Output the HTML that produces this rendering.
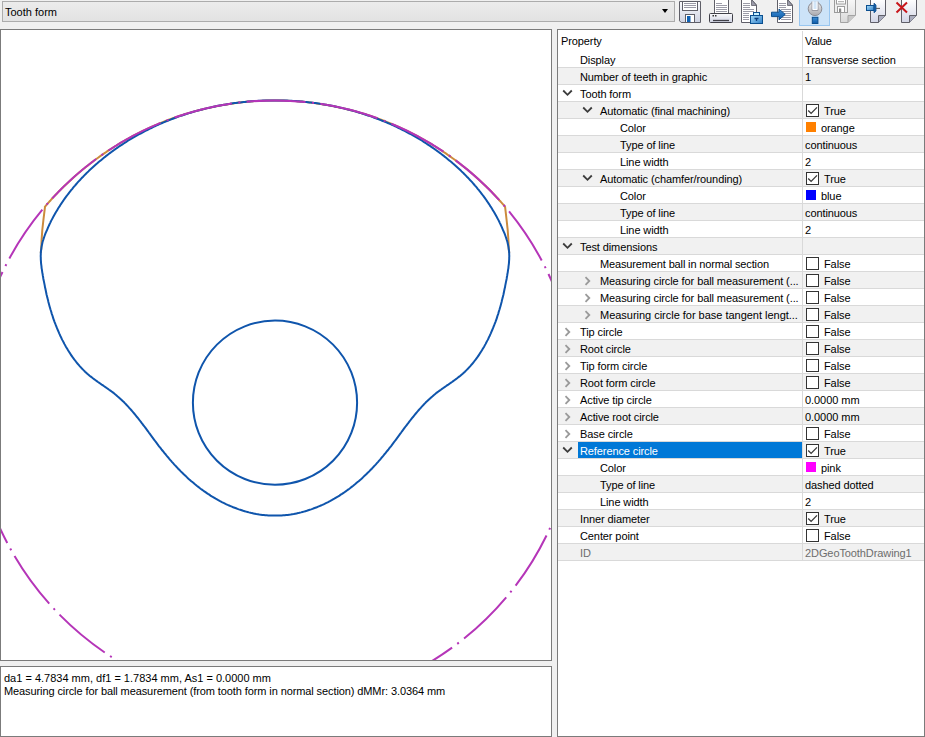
<!DOCTYPE html>
<html><head><meta charset="utf-8"><style>
*{margin:0;padding:0;box-sizing:border-box}
html,body{width:925px;height:737px;overflow:hidden;background:#f0f0f0;font-family:"Liberation Sans",sans-serif;font-size:11px;color:#000}
.abs{position:absolute}
#combo{left:2px;top:1px;width:673px;height:21px;border:1px solid #acacac;background:linear-gradient(#ececec,#e2e2e2)}
#combo .t{position:absolute;left:2px;top:4px;line-height:13px;white-space:pre}
#combo .arr{position:absolute;left:659px;top:7px;width:0;height:0;border-left:3.5px solid transparent;border-right:3.5px solid transparent;border-top:4.5px solid #000}
#graph{left:0;top:29px;width:552px;height:632px;border:1px solid #7b7b7b;background:#fff;overflow:hidden}
#graph svg{position:absolute;left:-1px;top:-30px}
#status{left:0;top:666px;width:552px;height:71px;border:1px solid #7b7b7b;background:#fff}
#status .l{position:absolute;left:3px;white-space:pre;line-height:13px}
#props{left:557px;top:29px;width:368px;height:708px;border:1px solid #7b7b7b;background:#fff;overflow:hidden;letter-spacing:-0.1px}
.row{position:absolute;left:0;width:366px;height:17px;border-bottom:1px solid #d9d9d9;background:#fff}
.row.g{background:#f1f1f1}
.row .n{position:absolute;top:3px;line-height:13px;white-space:pre}
.row .v{position:absolute;top:3px;line-height:13px;white-space:pre}
.row .sel{position:absolute;left:20px;top:0;width:224px;height:16px;background:#0078d7}
.cb{position:absolute;left:248px;top:2px;width:13px;height:13px;border:1px solid #333;background:#fff}
.sw{position:absolute;left:248px;top:3px;width:10px;height:10px}
.divider{position:absolute;left:244px;top:1px;width:1px;height:530px;background:#d9d9d9}
</style></head>
<body>
<div id="combo" class="abs"><span class="t">Tooth form</span><div class="arr"></div></div>
<svg class="abs" style="left:0;top:0" width="925" height="28" viewBox="0 0 925 28">
<defs>
<linearGradient id="gBody" x1="0" y1="0" x2="0" y2="1"><stop offset="0" stop-color="#fbfbfd"/><stop offset="1" stop-color="#cfd3e2"/></linearGradient>
<linearGradient id="gPage" x1="0" y1="0" x2="0" y2="1"><stop offset="0" stop-color="#ffffff"/><stop offset="1" stop-color="#d3d6e6"/></linearGradient>
<linearGradient id="gBlue" x1="0" y1="0" x2="1" y2="1"><stop offset="0" stop-color="#a9dcf8"/><stop offset="1" stop-color="#2e7fc8"/></linearGradient>
<linearGradient id="gBlue2" x1="0" y1="0" x2="0" y2="1"><stop offset="0" stop-color="#3f8fd6"/><stop offset="1" stop-color="#0d5aa8"/></linearGradient>
<linearGradient id="gGray" x1="0" y1="0" x2="0" y2="1"><stop offset="0" stop-color="#eeeeee"/><stop offset="1" stop-color="#a9a9ae"/></linearGradient>
<linearGradient id="gDis" x1="0" y1="0" x2="0" y2="1"><stop offset="0" stop-color="#f8f8f8"/><stop offset="1" stop-color="#d9d9d9"/></linearGradient>
</defs>
<!-- floppy -->
<path d="M679.5,1.5 H700.5 V22.5 H681.2 L679.5,20.8 Z" fill="url(#gBody)" stroke="#5f5f68" stroke-width="1"/>
<rect x="682.5" y="1.5" width="15" height="9" fill="#fff" stroke="#5f5f68"/>
<path d="M684,3.5 H696 M684,5.5 H696 M684,7.5 H696" stroke="#9a9aa6" stroke-width="1"/>
<rect x="685.5" y="14.5" width="9" height="8" fill="#fff" stroke="#5f5f68"/>
<rect x="687" y="16" width="3.5" height="6" fill="#1062b4"/>
<!-- printer -->
<rect x="714.5" y="-0.5" width="14" height="14" fill="#fff" stroke="#5f5f68"/>
<path d="M716,3.5 H722 M716,5.5 H727 M716,7.5 H727 M716,9.5 H727 M716,11.5 H727" stroke="#9c9ca8" stroke-width="1"/>
<rect x="709.5" y="13.5" width="23" height="9" rx="1" fill="url(#gBody)" stroke="#404048"/>
<rect x="712.5" y="15" width="1.5" height="1.5" fill="#333"/><rect x="715" y="15" width="1.5" height="1.5" fill="#333"/>
<path d="M713,20.5 H729" stroke="#404048" stroke-width="1.3"/>
<!-- doc + briefcase -->
<path d="M741.5,-0.5 H751.5 L756.5,5 V22.5 H741.5 Z" fill="#fff" stroke="#5f5f68"/>
<path d="M751.5,-0.5 V5.5 H756.5 Z" fill="#9c9cab" stroke="#5f5f68" stroke-width="0.8"/>
<path d="M743,3.5 H750 M743,5.5 H750 M743,7.5 H750 M743,9.5 H754 M743,11.5 H754 M743,13.5 H749 M743,15.5 H749 M743,17.5 H749 M743,19.5 H749" stroke="#9c9ca8" stroke-width="1"/>
<rect x="753.5" y="12.5" width="6" height="3.5" fill="#c9f1ff" stroke="#0b4f8f"/>
<rect x="750.5" y="15.5" width="12" height="8" fill="url(#gBlue)" stroke="#0b4f8f"/>
<path d="M754.5,18.5 H758.5 M756.5,18.5 V21" stroke="#0b3f7f" stroke-width="1.3"/>
<!-- import -->
<path d="M777.5,-0.5 H787.5 L792.5,5 V22.5 H777.5 Z" fill="#fff" stroke="#5f5f68"/>
<path d="M787.5,-0.5 V5.5 H792.5 Z" fill="#9c9cab" stroke="#5f5f68" stroke-width="0.8"/>
<path d="M779,3.5 H786 M779,5.5 H786 M779,7.5 H786 M781,9.5 H791 M782,11.5 H791 M784,13.5 H791 M783,15.5 H791 M782,17.5 H791 M781,19.5 H791" stroke="#9c9ca8" stroke-width="1"/>
<path d="M771.5,12.2 H779 V9 L785.2,14.4 L779,19.8 V16.6 H771.5 Z" fill="url(#gBlue2)" stroke="#0b4f8f" stroke-width="1"/>
<!-- highlighted tool -->
<rect x="799.5" y="-0.5" width="30" height="26" fill="#cce3f8" stroke="#98c6f0"/>
<circle cx="815" cy="8.8" r="6.8" fill="url(#gGray)" stroke="#8d8d94"/>
<path d="M812,1.5 V10.5 H818 V1.5" fill="#dde9f5" stroke="#9a9aa2" stroke-width="1"/>
<path d="M813,1.5 V9.5 H817 V1.5" fill="#d3e6f8" stroke="#ffffff" stroke-width="1"/>
<rect x="812.3" y="17.3" width="5.6" height="6.2" fill="url(#gBlue2)" stroke="#0b4f8f"/>
<!-- disabled -->
<path d="M840.5,-0.5 H855.5 V15 L848,22.5 H840.5 Z" fill="url(#gDis)" stroke="#a3a3a3"/>
<path d="M848,22.5 V15.5 H855.5" fill="#c8c8c8" stroke="#a3a3a3"/>
<rect x="834.5" y="-0.5" width="13" height="13" fill="#efefef" stroke="#9c9c9c"/>
<rect x="836.5" y="-0.5" width="9" height="4.5" fill="#fff" stroke="#9c9c9c"/>
<path d="M838,1.7 H844" stroke="#a8a8a8"/>
<rect x="837.5" y="6.5" width="7" height="6" fill="#fff" stroke="#9c9c9c"/>
<rect x="839" y="8.5" width="2.2" height="3.5" fill="#8a8a8a"/>
<!-- pin page -->
<path d="M870.5,-0.5 H885.5 V15.5 L878.5,22.5 H870.5 Z" fill="url(#gPage)" stroke="#5f5f68"/>
<path d="M878.5,22.5 V15.5 H885.5" fill="#a9acbd" stroke="#5f5f68"/>
<rect x="866.5" y="5.5" width="7.5" height="5" fill="url(#gBlue)" stroke="#0b4f8f"/>
<path d="M874,3.2 L876,5 V11 L874,12.8 Z" fill="#1a60a8" stroke="#0b4f8f" stroke-width="0.8"/>
<path d="M876,8.4 H880" stroke="#555" stroke-width="1"/>
<!-- delete page -->
<path d="M901.5,-0.5 H916.5 V15.5 L909.5,22.5 H901.5 Z" fill="url(#gPage)" stroke="#5f5f68"/>
<path d="M909.5,22.5 V15.5 H916.5" fill="#a9acbd" stroke="#5f5f68"/>
<path d="M896.5,2.5 L907,12.5 M896.5,12.5 L907,2.5" stroke="#c8161b" stroke-width="2"/>
</svg>

<div id="graph" class="abs"><svg width="552" height="690" viewBox="0 0 552 690">
<path d="M275.0,100.5 L272.8,100.5 L270.6,100.5 L268.4,100.6 L266.2,100.6 L264.0,100.7 L261.8,100.8 L259.6,100.9 L257.4,101.0 L255.2,101.1 L253.0,101.3 L250.9,101.5 L248.7,101.6 L246.5,101.8 L244.3,102.1 L242.1,102.3 L239.9,102.5 L237.7,102.8 L235.6,103.1 L233.4,103.4 L231.2,103.7 L229.0,104.0 L226.9,104.4 L224.7,104.7 L222.5,105.1 L220.4,105.5 L218.2,105.9 L216.0,106.3 L213.9,106.7 L211.7,107.2 L209.6,107.7 L207.4,108.1 L205.3,108.6 L203.2,109.2 L201.0,109.7 L198.9,110.2 L196.8,110.8 L194.7,111.4 L192.5,112.0 L190.4,112.6 L188.3,113.2 L186.2,113.8 L184.1,114.5 L182.0,115.2 L179.9,115.8 L177.9,116.5 L175.8,117.3 L173.7,118.0 L171.6,118.7 L169.6,119.5 L167.5,120.3 L165.5,121.0 L163.4,121.9 L161.4,122.7 L159.4,123.5 L157.3,124.4 L155.3,125.2 L153.3,126.1 L151.3,127.0 L149.3,127.9 L147.3,128.8 L145.3,129.8 L143.3,130.7 L141.3,131.7 L139.4,132.6 L137.4,133.6 L135.5,134.6 L133.5,135.7 L131.6,136.7 L129.6,137.8 L127.7,138.8 L125.8,139.9 L123.9,141.0 L122.0,142.1 L120.1,143.2 L118.2,144.3 L116.4,145.5 L114.5,146.7 L112.6,147.8 L110.8,149.0 L108.9,150.2 L107.1,151.4 L105.3,152.7 L103.5,153.9 L101.7,155.2 L99.9,156.4 L98.1,157.7 L96.3,159.0 L94.5,160.3 L92.8,161.6 L91.0,162.9 L89.3,164.3 L87.6,165.7 L85.8,167.0 L84.1,168.4 L82.4,169.8 L80.7,171.2 L79.1,172.6 L77.4,174.1 L75.7,175.5 L74.1,177.0 L72.5,178.4 L70.8,179.9 L69.2,181.4 L67.6,182.9 L66.0,184.4 L64.4,185.9 L62.9,187.5 L61.3,189.0 L59.8,190.6 L58.2,192.1 L56.7,193.7 L55.2,195.3 L53.7,196.9 L52.2,198.5 L50.7,200.2 L49.2,201.8 L47.8,203.4 L46.3,205.1 L44.9,206.8 L45.0,206.8 L43.4,220.0 L42.3,230.0 L41.6,240.0 L41.4,245.0 L41.3,248.6 L41.1,250.1 L40.9,251.6 L40.8,253.1 M275.0,100.5 L277.2,100.5 L279.4,100.5 L281.6,100.6 L283.8,100.6 L286.0,100.7 L288.2,100.8 L290.4,100.9 L292.6,101.0 L294.8,101.1 L297.0,101.3 L299.1,101.5 L301.3,101.6 L303.5,101.8 L305.7,102.1 L307.9,102.3 L310.1,102.5 L312.3,102.8 L314.4,103.1 L316.6,103.4 L318.8,103.7 L321.0,104.0 L323.1,104.4 L325.3,104.7 L327.5,105.1 L329.6,105.5 L331.8,105.9 L334.0,106.3 L336.1,106.7 L338.3,107.2 L340.4,107.7 L342.6,108.1 L344.7,108.6 L346.8,109.2 L349.0,109.7 L351.1,110.2 L353.2,110.8 L355.3,111.4 L357.5,112.0 L359.6,112.6 L361.7,113.2 L363.8,113.8 L365.9,114.5 L368.0,115.2 L370.1,115.8 L372.1,116.5 L374.2,117.3 L376.3,118.0 L378.4,118.7 L380.4,119.5 L382.5,120.3 L384.5,121.0 L386.6,121.9 L388.6,122.7 L390.6,123.5 L392.7,124.4 L394.7,125.2 L396.7,126.1 L398.7,127.0 L400.7,127.9 L402.7,128.8 L404.7,129.8 L406.7,130.7 L408.7,131.7 L410.6,132.6 L412.6,133.6 L414.5,134.6 L416.5,135.7 L418.4,136.7 L420.4,137.8 L422.3,138.8 L424.2,139.9 L426.1,141.0 L428.0,142.1 L429.9,143.2 L431.8,144.3 L433.6,145.5 L435.5,146.7 L437.4,147.8 L439.2,149.0 L441.1,150.2 L442.9,151.4 L444.7,152.7 L446.5,153.9 L448.3,155.2 L450.1,156.4 L451.9,157.7 L453.7,159.0 L455.5,160.3 L457.2,161.6 L459.0,162.9 L460.7,164.3 L462.4,165.7 L464.2,167.0 L465.9,168.4 L467.6,169.8 L469.3,171.2 L470.9,172.6 L472.6,174.1 L474.3,175.5 L475.9,177.0 L477.5,178.4 L479.2,179.9 L480.8,181.4 L482.4,182.9 L484.0,184.4 L485.6,185.9 L487.1,187.5 L488.7,189.0 L490.2,190.6 L491.8,192.1 L493.3,193.7 L494.8,195.3 L496.3,196.9 L497.8,198.5 L499.3,200.2 L500.8,201.8 L502.2,203.4 L503.7,205.1 L505.1,206.8 L505.1,206.8 L506.6,220.0 L507.7,230.0 L508.4,240.0 L508.6,245.0 L508.7,248.6 L508.9,250.1 L509.1,251.6 L509.2,253.1" fill="none" stroke="#cc8a3c" stroke-width="2" stroke-linejoin="round"/>
<path d="M275.0,100.4 L273.5,100.4 L272.0,100.4 L270.5,100.4 L269.0,100.4 L267.5,100.5 L266.0,100.5 L264.5,100.6 L263.0,100.6 L261.5,100.7 L260.0,100.7 L258.5,100.8 L257.0,100.9 L255.5,101.0 L254.0,101.1 L252.5,101.2 L251.0,101.3 L249.5,101.5 L248.0,101.6 L246.5,101.7 L245.0,101.9 L243.5,102.0 L242.0,102.2 L240.5,102.4 L239.0,102.5 L237.5,102.7 L236.0,102.9 L234.5,103.1 L233.0,103.3 L231.5,103.5 L230.1,103.8 L228.6,104.0 L227.1,104.2 L225.6,104.5 L224.1,104.7 L222.6,105.0 L221.2,105.3 L219.7,105.5 L218.2,105.8 L216.7,106.1 L215.2,106.4 L213.8,106.7 L212.3,107.0 L210.8,107.4 L209.4,107.7 L207.9,108.0 L206.4,108.4 L205.0,108.7 L203.5,109.1 L202.1,109.5 L200.6,109.8 L199.1,110.2 L197.7,110.6 L196.2,111.0 L194.8,111.4 L193.4,111.8 L191.9,112.3 L190.5,112.7 L189.0,113.1 L187.6,113.6 L186.2,114.0 L184.7,114.5 L183.3,115.0 L181.9,115.5 L180.4,115.9 L179.0,116.4 L177.6,116.9 L176.2,117.5 L174.8,118.0 L173.4,118.5 L172.0,119.0 L170.6,119.6 L169.2,120.1 L167.8,120.7 L166.4,121.2 L165.0,121.8 L163.6,122.4 L162.2,123.0 L160.8,123.6 L159.4,124.2 L158.1,124.8 L156.7,125.4 L155.3,126.0 L154.0,126.7 L152.6,127.3 L151.3,128.0 L149.9,128.6 L148.6,129.3 L147.2,130.0 L145.9,130.7 L144.5,131.4 L143.2,132.1 L141.9,132.8 L140.6,133.5 L139.2,134.2 L137.9,134.9 L136.6,135.7 L135.3,136.4 L134.0,137.2 L132.7,137.9 L131.4,138.7 L130.1,139.5 L128.8,140.2 L127.5,141.0 L126.3,141.8 L125.0,142.6 L123.7,143.5 L122.5,144.3 L121.2,145.1 L120.0,145.9 L118.7,146.8 L117.5,147.6 L116.3,148.5 L115.0,149.4 L113.8,150.2 L112.6,151.1 L111.4,152.0 L110.2,152.9 L109.0,153.8 L107.8,154.7 L106.6,155.6 L105.4,156.6 L104.2,157.5 L103.0,158.5 L101.9,159.4 L100.7,160.4 L99.6,161.3 L98.4,162.3 L97.3,163.3 L96.1,164.3 L95.0,165.3 L93.9,166.3 L92.8,167.3 L91.7,168.3 L90.6,169.3 L89.5,170.3 L88.4,171.4 L87.3,172.4 L86.2,173.5 L85.2,174.6 L84.1,175.6 L83.1,176.7 L82.0,177.8 L81.0,178.9 L80.0,180.0 L78.9,181.1 L77.9,182.2 L76.9,183.3 L75.9,184.5 L75.0,185.6 L74.0,186.7 L73.0,187.9 L72.1,189.1 L71.1,190.2 L70.2,191.4 L69.2,192.6 L68.3,193.8 L67.4,195.0 L66.5,196.2 L65.6,197.4 L64.7,198.6 L63.9,199.8 L63.0,201.1 L62.2,202.3 L61.3,203.6 L60.5,204.8 L59.7,206.1 L58.9,207.3 L58.1,208.6 L57.3,209.9 L56.5,211.2 L55.7,212.5 L55.0,213.8 L54.3,215.1 L53.5,216.4 L52.8,217.8 L52.1,219.1 L51.4,220.4 L50.7,221.8 L50.1,223.1 L49.4,224.5 L48.8,225.8 L48.2,227.2 L47.6,228.6 L47.0,230.0 L46.4,231.3 L45.8,232.7 L45.2,234.1 L44.7,235.5 L44.2,237.0 L43.7,238.4 L43.3,239.8 L42.8,241.3 L42.4,242.7 L42.1,244.2 L41.8,245.6 L41.5,247.1 L41.3,248.6 L41.1,250.1 L40.9,251.6 L40.8,253.1 L40.8,254.6 L40.7,256.1 L40.8,257.6 L40.8,259.1 L40.9,260.6 L41.0,262.1 L41.1,263.6 L41.3,265.1 L41.5,266.6 L41.6,268.1 L41.9,269.6 L42.1,271.1 L42.3,272.6 L42.6,274.0 L42.8,275.5 L43.1,277.0 L43.3,278.5 L43.6,280.0 L43.9,281.4 L44.2,282.9 L44.5,284.4 L44.8,285.9 L45.0,287.3 L45.4,288.8 L45.7,290.3 L46.0,291.8 L46.3,293.2 L46.6,294.7 L47.0,296.2 L47.3,297.6 L47.7,299.1 L48.1,300.5 L48.4,302.0 L48.8,303.5 L49.2,304.9 L49.6,306.4 L50.0,307.8 L50.4,309.3 L50.9,310.7 L51.3,312.1 L51.7,313.6 L52.2,315.0 L52.7,316.4 L53.1,317.9 L53.6,319.3 L54.1,320.7 L54.6,322.1 L55.2,323.5 L55.7,324.9 L56.3,326.3 L56.8,327.7 L57.4,329.1 L58.0,330.5 L58.6,331.9 L59.2,333.3 L59.8,334.6 L60.4,336.0 L61.1,337.4 L61.7,338.7 L62.4,340.1 L63.1,341.4 L63.8,342.7 L64.5,344.1 L65.2,345.4 L65.9,346.7 L66.7,348.0 L67.5,349.3 L68.2,350.6 L69.0,351.8 L69.9,353.1 L70.7,354.4 L71.5,355.6 L72.4,356.9 L73.3,358.1 L74.2,359.3 L75.1,360.5 L76.0,361.7 L76.9,362.8 L77.9,364.0 L78.9,365.1 L79.9,366.3 L80.9,367.4 L81.9,368.5 L83.0,369.6 L84.0,370.6 L85.1,371.7 L86.2,372.7 L87.3,373.7 L88.5,374.7 L89.6,375.7 L90.8,376.6 L92.0,377.5 L93.2,378.5 L94.4,379.4 L95.6,380.2 L96.8,381.1 L98.0,382.0 L99.3,382.9 L100.5,383.7 L101.7,384.6 L103.0,385.4 L104.2,386.3 L105.4,387.1 L106.7,388.0 L107.9,388.8 L109.1,389.7 L110.4,390.6 L111.6,391.5 L112.8,392.4 L114.0,393.3 L115.1,394.3 L116.3,395.2 L117.4,396.2 L118.6,397.2 L119.7,398.2 L120.8,399.2 L121.9,400.2 L123.0,401.3 L124.1,402.3 L125.1,403.4 L126.2,404.5 L127.2,405.6 L128.2,406.7 L129.2,407.8 L130.2,408.9 L131.2,410.0 L132.2,411.2 L133.2,412.3 L134.2,413.5 L135.1,414.6 L136.1,415.8 L137.0,417.0 L138.0,418.1 L138.9,419.3 L139.8,420.5 L140.7,421.7 L141.6,422.9 L142.6,424.1 L143.5,425.3 L144.4,426.5 L145.3,427.7 L146.2,428.9 L147.1,430.1 L148.0,431.3 L148.8,432.5 L149.7,433.7 L150.6,434.9 L151.5,436.2 L152.4,437.4 L153.3,438.6 L154.2,439.8 L155.1,441.0 L156.0,442.2 L156.9,443.4 L157.8,444.6 L158.7,445.8 L159.7,447.0 L160.6,448.2 L161.5,449.4 L162.4,450.5 L163.4,451.7 L164.3,452.9 L165.3,454.0 L166.2,455.2 L167.2,456.4 L168.2,457.5 L169.1,458.7 L170.1,459.8 L171.1,460.9 L172.1,462.1 L173.1,463.2 L174.1,464.3 L175.1,465.4 L176.2,466.5 L177.2,467.6 L178.2,468.7 L179.3,469.8 L180.3,470.9 L181.4,471.9 L182.5,473.0 L183.5,474.0 L184.6,475.1 L185.7,476.1 L186.8,477.1 L187.9,478.2 L189.0,479.2 L190.2,480.2 L191.3,481.2 L192.4,482.1 L193.6,483.1 L194.7,484.1 L195.9,485.0 L197.1,486.0 L198.3,486.9 L199.4,487.8 L200.6,488.7 L201.9,489.6 L203.1,490.5 L204.3,491.4 L205.5,492.2 L206.8,493.1 L208.0,493.9 L209.3,494.7 L210.5,495.6 L211.8,496.4 L213.1,497.1 L214.4,497.9 L215.7,498.7 L217.0,499.4 L218.3,500.2 L219.6,500.9 L221.0,501.6 L222.3,502.3 L223.6,502.9 L225.0,503.6 L226.4,504.3 L227.7,504.9 L229.1,505.5 L230.5,506.1 L231.9,506.7 L233.2,507.3 L234.6,507.8 L236.1,508.3 L237.5,508.9 L238.9,509.4 L240.3,509.8 L241.7,510.3 L243.2,510.8 L244.6,511.2 L246.1,511.6 L247.5,512.0 L249.0,512.4 L250.4,512.7 L251.9,513.1 L253.4,513.4 L254.8,513.7 L256.3,514.0 L257.8,514.2 L259.3,514.5 L260.8,514.7 L262.3,514.9 L263.8,515.0 L265.3,515.2 L266.8,515.3 L268.3,515.4 L269.8,515.5 L271.3,515.5 L272.8,515.6 L275.0,515.6 L277.2,515.6 L278.7,515.5 L280.2,515.5 L281.7,515.4 L283.2,515.3 L284.7,515.2 L286.2,515.0 L287.7,514.9 L289.2,514.7 L290.7,514.5 L292.2,514.2 L293.7,514.0 L295.2,513.7 L296.6,513.4 L298.1,513.1 L299.6,512.7 L301.0,512.4 L302.5,512.0 L303.9,511.6 L305.4,511.2 L306.8,510.8 L308.3,510.3 L309.7,509.8 L311.1,509.4 L312.5,508.9 L313.9,508.3 L315.4,507.8 L316.8,507.3 L318.1,506.7 L319.5,506.1 L320.9,505.5 L322.3,504.9 L323.6,504.3 L325.0,503.6 L326.4,502.9 L327.7,502.3 L329.0,501.6 L330.4,500.9 L331.7,500.2 L333.0,499.4 L334.3,498.7 L335.6,497.9 L336.9,497.1 L338.2,496.4 L339.5,495.6 L340.7,494.7 L342.0,493.9 L343.2,493.1 L344.5,492.2 L345.7,491.4 L346.9,490.5 L348.1,489.6 L349.4,488.7 L350.6,487.8 L351.7,486.9 L352.9,486.0 L354.1,485.0 L355.3,484.1 L356.4,483.1 L357.6,482.1 L358.7,481.2 L359.8,480.2 L361.0,479.2 L362.1,478.2 L363.2,477.1 L364.3,476.1 L365.4,475.1 L366.5,474.0 L367.5,473.0 L368.6,471.9 L369.7,470.9 L370.7,469.8 L371.8,468.7 L372.8,467.6 L373.8,466.5 L374.9,465.4 L375.9,464.3 L376.9,463.2 L377.9,462.1 L378.9,460.9 L379.9,459.8 L380.9,458.7 L381.8,457.5 L382.8,456.4 L383.8,455.2 L384.7,454.0 L385.7,452.9 L386.6,451.7 L387.6,450.5 L388.5,449.4 L389.4,448.2 L390.3,447.0 L391.3,445.8 L392.2,444.6 L393.1,443.4 L394.0,442.2 L394.9,441.0 L395.8,439.8 L396.7,438.6 L397.6,437.4 L398.5,436.2 L399.4,434.9 L400.3,433.7 L401.2,432.5 L402.0,431.3 L402.9,430.1 L403.8,428.9 L404.7,427.7 L405.6,426.5 L406.5,425.3 L407.4,424.1 L408.4,422.9 L409.3,421.7 L410.2,420.5 L411.1,419.3 L412.0,418.1 L413.0,417.0 L413.9,415.8 L414.9,414.6 L415.8,413.5 L416.8,412.3 L417.8,411.2 L418.8,410.0 L419.8,408.9 L420.8,407.8 L421.8,406.7 L422.8,405.6 L423.8,404.5 L424.9,403.4 L425.9,402.3 L427.0,401.3 L428.1,400.2 L429.2,399.2 L430.3,398.2 L431.4,397.2 L432.6,396.2 L433.7,395.2 L434.9,394.3 L436.0,393.3 L437.2,392.4 L438.4,391.5 L439.6,390.6 L440.9,389.7 L442.1,388.8 L443.3,388.0 L444.6,387.1 L445.8,386.3 L447.0,385.4 L448.3,384.6 L449.5,383.7 L450.7,382.9 L452.0,382.0 L453.2,381.1 L454.4,380.2 L455.6,379.4 L456.8,378.5 L458.0,377.5 L459.2,376.6 L460.4,375.7 L461.5,374.7 L462.7,373.7 L463.8,372.7 L464.9,371.7 L466.0,370.6 L467.0,369.6 L468.1,368.5 L469.1,367.4 L470.1,366.3 L471.1,365.1 L472.1,364.0 L473.1,362.8 L474.0,361.7 L474.9,360.5 L475.8,359.3 L476.7,358.1 L477.6,356.9 L478.5,355.6 L479.3,354.4 L480.1,353.1 L481.0,351.8 L481.8,350.6 L482.5,349.3 L483.3,348.0 L484.1,346.7 L484.8,345.4 L485.5,344.1 L486.2,342.7 L486.9,341.4 L487.6,340.1 L488.3,338.7 L488.9,337.4 L489.6,336.0 L490.2,334.6 L490.8,333.3 L491.4,331.9 L492.0,330.5 L492.6,329.1 L493.2,327.7 L493.7,326.3 L494.3,324.9 L494.8,323.5 L495.4,322.1 L495.9,320.7 L496.4,319.3 L496.9,317.9 L497.3,316.4 L497.8,315.0 L498.3,313.6 L498.7,312.1 L499.1,310.7 L499.6,309.3 L500.0,307.8 L500.4,306.4 L500.8,304.9 L501.2,303.5 L501.6,302.0 L501.9,300.5 L502.3,299.1 L502.7,297.6 L503.0,296.2 L503.4,294.7 L503.7,293.2 L504.0,291.8 L504.3,290.3 L504.6,288.8 L505.0,287.3 L505.2,285.9 L505.5,284.4 L505.8,282.9 L506.1,281.4 L506.4,280.0 L506.7,278.5 L506.9,277.0 L507.2,275.5 L507.4,274.0 L507.7,272.6 L507.9,271.1 L508.1,269.6 L508.4,268.1 L508.5,266.6 L508.7,265.1 L508.9,263.6 L509.0,262.1 L509.1,260.6 L509.2,259.1 L509.2,257.6 L509.3,256.1 L509.2,254.6 L509.2,253.1 L509.1,251.6 L508.9,250.1 L508.7,248.6 L508.5,247.1 L508.2,245.6 L507.9,244.2 L507.6,242.7 L507.2,241.3 L506.7,239.8 L506.3,238.4 L505.8,237.0 L505.3,235.5 L504.8,234.1 L504.2,232.7 L503.6,231.3 L503.0,230.0 L502.4,228.6 L501.8,227.2 L501.2,225.8 L500.6,224.5 L499.9,223.1 L499.3,221.8 L498.6,220.4 L497.9,219.1 L497.2,217.8 L496.5,216.4 L495.7,215.1 L495.0,213.8 L494.3,212.5 L493.5,211.2 L492.7,209.9 L491.9,208.6 L491.1,207.3 L490.3,206.1 L489.5,204.8 L488.7,203.6 L487.8,202.3 L487.0,201.1 L486.1,199.8 L485.3,198.6 L484.4,197.4 L483.5,196.2 L482.6,195.0 L481.7,193.8 L480.8,192.6 L479.8,191.4 L478.9,190.2 L477.9,189.1 L477.0,187.9 L476.0,186.7 L475.0,185.6 L474.1,184.5 L473.1,183.3 L472.1,182.2 L471.1,181.1 L470.0,180.0 L469.0,178.9 L468.0,177.8 L466.9,176.7 L465.9,175.6 L464.8,174.6 L463.8,173.5 L462.7,172.4 L461.6,171.4 L460.5,170.3 L459.4,169.3 L458.3,168.3 L457.2,167.3 L456.1,166.3 L455.0,165.3 L453.9,164.3 L452.7,163.3 L451.6,162.3 L450.4,161.3 L449.3,160.4 L448.1,159.4 L447.0,158.5 L445.8,157.5 L444.6,156.6 L443.4,155.6 L442.2,154.7 L441.0,153.8 L439.8,152.9 L438.6,152.0 L437.4,151.1 L436.2,150.2 L435.0,149.4 L433.7,148.5 L432.5,147.6 L431.3,146.8 L430.0,145.9 L428.8,145.1 L427.5,144.3 L426.3,143.5 L425.0,142.6 L423.7,141.8 L422.5,141.0 L421.2,140.2 L419.9,139.5 L418.6,138.7 L417.3,137.9 L416.0,137.2 L414.7,136.4 L413.4,135.7 L412.1,134.9 L410.8,134.2 L409.4,133.5 L408.1,132.8 L406.8,132.1 L405.5,131.4 L404.1,130.7 L402.8,130.0 L401.4,129.3 L400.1,128.6 L398.7,128.0 L397.4,127.3 L396.0,126.7 L394.7,126.0 L393.3,125.4 L391.9,124.8 L390.6,124.2 L389.2,123.6 L387.8,123.0 L386.4,122.4 L385.0,121.8 L383.6,121.2 L382.2,120.7 L380.8,120.1 L379.4,119.6 L378.0,119.0 L376.6,118.5 L375.2,118.0 L373.8,117.5 L372.4,116.9 L371.0,116.4 L369.6,115.9 L368.1,115.5 L366.7,115.0 L365.3,114.5 L363.8,114.0 L362.4,113.6 L361.0,113.1 L359.5,112.7 L358.1,112.3 L356.6,111.8 L355.2,111.4 L353.8,111.0 L352.3,110.6 L350.9,110.2 L349.4,109.8 L347.9,109.5 L346.5,109.1 L345.0,108.7 L343.6,108.4 L342.1,108.0 L340.6,107.7 L339.2,107.4 L337.7,107.0 L336.2,106.7 L334.8,106.4 L333.3,106.1 L331.8,105.8 L330.3,105.5 L328.8,105.3 L327.4,105.0 L325.9,104.7 L324.4,104.5 L322.9,104.2 L321.4,104.0 L319.9,103.8 L318.5,103.5 L317.0,103.3 L315.5,103.1 L314.0,102.9 L312.5,102.7 L311.0,102.5 L309.5,102.4 L308.0,102.2 L306.5,102.0 L305.0,101.9 L303.5,101.7 L302.0,101.6 L300.5,101.5 L299.0,101.3 L297.5,101.2 L296.0,101.1 L294.5,101.0 L293.0,100.9 L291.5,100.8 L290.0,100.7 L288.5,100.7 L287.0,100.6 L285.5,100.6 L284.0,100.5 L282.5,100.5 L281.0,100.4 L279.5,100.4 L278.0,100.4 L276.5,100.4Z" fill="none" stroke="#0f55ac" stroke-width="2"/>
<circle cx="275.0" cy="402.7" r="82.1" fill="none" stroke="#0f55ac" stroke-width="2"/>
<path d="M577.2,402.7 A302.2,302.2 0 1 0 -27.19999999999999,402.7 A302.2,302.2 0 1 0 577.2,402.7" fill="none" stroke="#b535b8" stroke-width="2" stroke-dasharray="59 6.4 2 6.6"/>
</svg></div>
<div id="status" class="abs"><span class="l" style="top:5px">da1 = 4.7834 mm, df1 = 1.7834 mm, As1 = 0.0000 mm</span><span class="l" style="top:18px;letter-spacing:-0.1px">Measuring circle for ball measurement (from tooth form in normal section) dMMr: 3.0364 mm</span></div>
<div id="props" class="abs"><div class="row" style="top:0;height:21px;border-bottom:none"><span class="n" style="left:3px;top:5px">Property</span><span class="v" style="left:247px;top:5px">Value</span></div>
<div class="row" style="top:21px"><span class="n" style="left:22px">Display</span><span class="v" style="left:247px">Transverse section</span></div>
<div class="row g" style="top:38px"><span class="n" style="left:22px">Number of teeth in graphic</span><span class="v" style="left:247px">1</span></div>
<div class="row" style="top:55px"><svg class="abs" style="left:4px;top:4px" width="11" height="8"><path d="M1.2,1.5 L5.5,5.8 L9.8,1.5" fill="none" stroke="#3c3c3c" stroke-width="1.8"/></svg><span class="n" style="left:22px">Tooth form</span><span class="v" style="left:247px"></span></div>
<div class="row g" style="top:72px"><svg class="abs" style="left:24px;top:4px" width="11" height="8"><path d="M1.2,1.5 L5.5,5.8 L9.8,1.5" fill="none" stroke="#3c3c3c" stroke-width="1.8"/></svg><span class="n" style="left:42px">Automatic (final machining)</span><div class="cb"><svg class="abs" style="left:0;top:0" width="11" height="11"><path d="M1.2,5.6 L4.1,8.4 L10,2.4" fill="none" stroke="#3a3a3a" stroke-width="1.35"/></svg></div><span class="v" style="left:266px">True</span></div>
<div class="row" style="top:89px"><span class="n" style="left:62px">Color</span><div class="sw" style="background:#ff8000"></div><span class="v" style="left:263px">orange</span></div>
<div class="row g" style="top:106px"><span class="n" style="left:62px">Type of line</span><span class="v" style="left:247px">continuous</span></div>
<div class="row" style="top:123px"><span class="n" style="left:62px">Line width</span><span class="v" style="left:247px">2</span></div>
<div class="row g" style="top:140px"><svg class="abs" style="left:24px;top:4px" width="11" height="8"><path d="M1.2,1.5 L5.5,5.8 L9.8,1.5" fill="none" stroke="#3c3c3c" stroke-width="1.8"/></svg><span class="n" style="left:42px">Automatic (chamfer/rounding)</span><div class="cb"><svg class="abs" style="left:0;top:0" width="11" height="11"><path d="M1.2,5.6 L4.1,8.4 L10,2.4" fill="none" stroke="#3a3a3a" stroke-width="1.35"/></svg></div><span class="v" style="left:266px">True</span></div>
<div class="row" style="top:157px"><span class="n" style="left:62px">Color</span><div class="sw" style="background:#0000ff"></div><span class="v" style="left:263px">blue</span></div>
<div class="row g" style="top:174px"><span class="n" style="left:62px">Type of line</span><span class="v" style="left:247px">continuous</span></div>
<div class="row" style="top:191px"><span class="n" style="left:62px">Line width</span><span class="v" style="left:247px">2</span></div>
<div class="row g" style="top:208px"><svg class="abs" style="left:4px;top:4px" width="11" height="8"><path d="M1.2,1.5 L5.5,5.8 L9.8,1.5" fill="none" stroke="#3c3c3c" stroke-width="1.8"/></svg><span class="n" style="left:22px">Test dimensions</span><span class="v" style="left:247px"></span></div>
<div class="row" style="top:225px"><span class="n" style="left:42px;letter-spacing:-0.14px">Measurement ball in normal section</span><div class="cb"></div><span class="v" style="left:266px">False</span></div>
<div class="row g" style="top:242px"><svg class="abs" style="left:26px;top:4px" width="8" height="10"><path d="M1.5,1.2 L5.3,5 L1.5,8.8" fill="none" stroke="#9a9a9a" stroke-width="1.8"/></svg><span class="n" style="left:42px;letter-spacing:-0.09px">Measuring circle for ball measurement (...</span><div class="cb"></div><span class="v" style="left:266px">False</span></div>
<div class="row" style="top:259px"><svg class="abs" style="left:26px;top:4px" width="8" height="10"><path d="M1.5,1.2 L5.3,5 L1.5,8.8" fill="none" stroke="#9a9a9a" stroke-width="1.8"/></svg><span class="n" style="left:42px;letter-spacing:-0.09px">Measuring circle for ball measurement (...</span><div class="cb"></div><span class="v" style="left:266px">False</span></div>
<div class="row g" style="top:276px"><svg class="abs" style="left:26px;top:4px" width="8" height="10"><path d="M1.5,1.2 L5.3,5 L1.5,8.8" fill="none" stroke="#9a9a9a" stroke-width="1.8"/></svg><span class="n" style="left:42px;letter-spacing:-0.02px">Measuring circle for base tangent lengt...</span><div class="cb"></div><span class="v" style="left:266px">False</span></div>
<div class="row" style="top:293px"><svg class="abs" style="left:6px;top:4px" width="8" height="10"><path d="M1.5,1.2 L5.3,5 L1.5,8.8" fill="none" stroke="#9a9a9a" stroke-width="1.8"/></svg><span class="n" style="left:22px">Tip circle</span><div class="cb"></div><span class="v" style="left:266px">False</span></div>
<div class="row g" style="top:310px"><svg class="abs" style="left:6px;top:4px" width="8" height="10"><path d="M1.5,1.2 L5.3,5 L1.5,8.8" fill="none" stroke="#9a9a9a" stroke-width="1.8"/></svg><span class="n" style="left:22px">Root circle</span><div class="cb"></div><span class="v" style="left:266px">False</span></div>
<div class="row" style="top:327px"><svg class="abs" style="left:6px;top:4px" width="8" height="10"><path d="M1.5,1.2 L5.3,5 L1.5,8.8" fill="none" stroke="#9a9a9a" stroke-width="1.8"/></svg><span class="n" style="left:22px">Tip form circle</span><div class="cb"></div><span class="v" style="left:266px">False</span></div>
<div class="row g" style="top:344px"><svg class="abs" style="left:6px;top:4px" width="8" height="10"><path d="M1.5,1.2 L5.3,5 L1.5,8.8" fill="none" stroke="#9a9a9a" stroke-width="1.8"/></svg><span class="n" style="left:22px">Root form circle</span><div class="cb"></div><span class="v" style="left:266px">False</span></div>
<div class="row" style="top:361px"><svg class="abs" style="left:6px;top:4px" width="8" height="10"><path d="M1.5,1.2 L5.3,5 L1.5,8.8" fill="none" stroke="#9a9a9a" stroke-width="1.8"/></svg><span class="n" style="left:22px">Active tip circle</span><span class="v" style="left:247px;letter-spacing:-0.06px">0.0000 mm</span></div>
<div class="row g" style="top:378px"><svg class="abs" style="left:6px;top:4px" width="8" height="10"><path d="M1.5,1.2 L5.3,5 L1.5,8.8" fill="none" stroke="#9a9a9a" stroke-width="1.8"/></svg><span class="n" style="left:22px">Active root circle</span><span class="v" style="left:247px;letter-spacing:-0.06px">0.0000 mm</span></div>
<div class="row" style="top:395px"><svg class="abs" style="left:6px;top:4px" width="8" height="10"><path d="M1.5,1.2 L5.3,5 L1.5,8.8" fill="none" stroke="#9a9a9a" stroke-width="1.8"/></svg><span class="n" style="left:22px">Base circle</span><div class="cb"></div><span class="v" style="left:266px">False</span></div>
<div class="row g" style="top:412px"><div class="sel"></div><svg class="abs" style="left:4px;top:4px" width="11" height="8"><path d="M1.2,1.5 L5.5,5.8 L9.8,1.5" fill="none" stroke="#3c3c3c" stroke-width="1.8"/></svg><span class="n" style="left:22px;color:#fff">Reference circle</span><div class="cb"><svg class="abs" style="left:0;top:0" width="11" height="11"><path d="M1.2,5.6 L4.1,8.4 L10,2.4" fill="none" stroke="#3a3a3a" stroke-width="1.35"/></svg></div><span class="v" style="left:266px">True</span></div>
<div class="row" style="top:429px"><span class="n" style="left:42px">Color</span><div class="sw" style="background:#ff00ff"></div><span class="v" style="left:263px">pink</span></div>
<div class="row g" style="top:446px"><span class="n" style="left:42px">Type of line</span><span class="v" style="left:247px">dashed dotted</span></div>
<div class="row" style="top:463px"><span class="n" style="left:42px">Line width</span><span class="v" style="left:247px">2</span></div>
<div class="row g" style="top:480px"><span class="n" style="left:22px">Inner diameter</span><div class="cb"><svg class="abs" style="left:0;top:0" width="11" height="11"><path d="M1.2,5.6 L4.1,8.4 L10,2.4" fill="none" stroke="#3a3a3a" stroke-width="1.35"/></svg></div><span class="v" style="left:266px">True</span></div>
<div class="row" style="top:497px"><span class="n" style="left:22px">Center point</span><div class="cb"></div><span class="v" style="left:266px">False</span></div>
<div class="row g" style="top:514px"><span class="n" style="left:22px;color:#6d6d6d">ID</span><span class="v" style="left:247px;color:#6d6d6d;letter-spacing:-0.09px">2DGeoToothDrawing1</span></div>
<div class="divider"></div></div>
</body></html>
